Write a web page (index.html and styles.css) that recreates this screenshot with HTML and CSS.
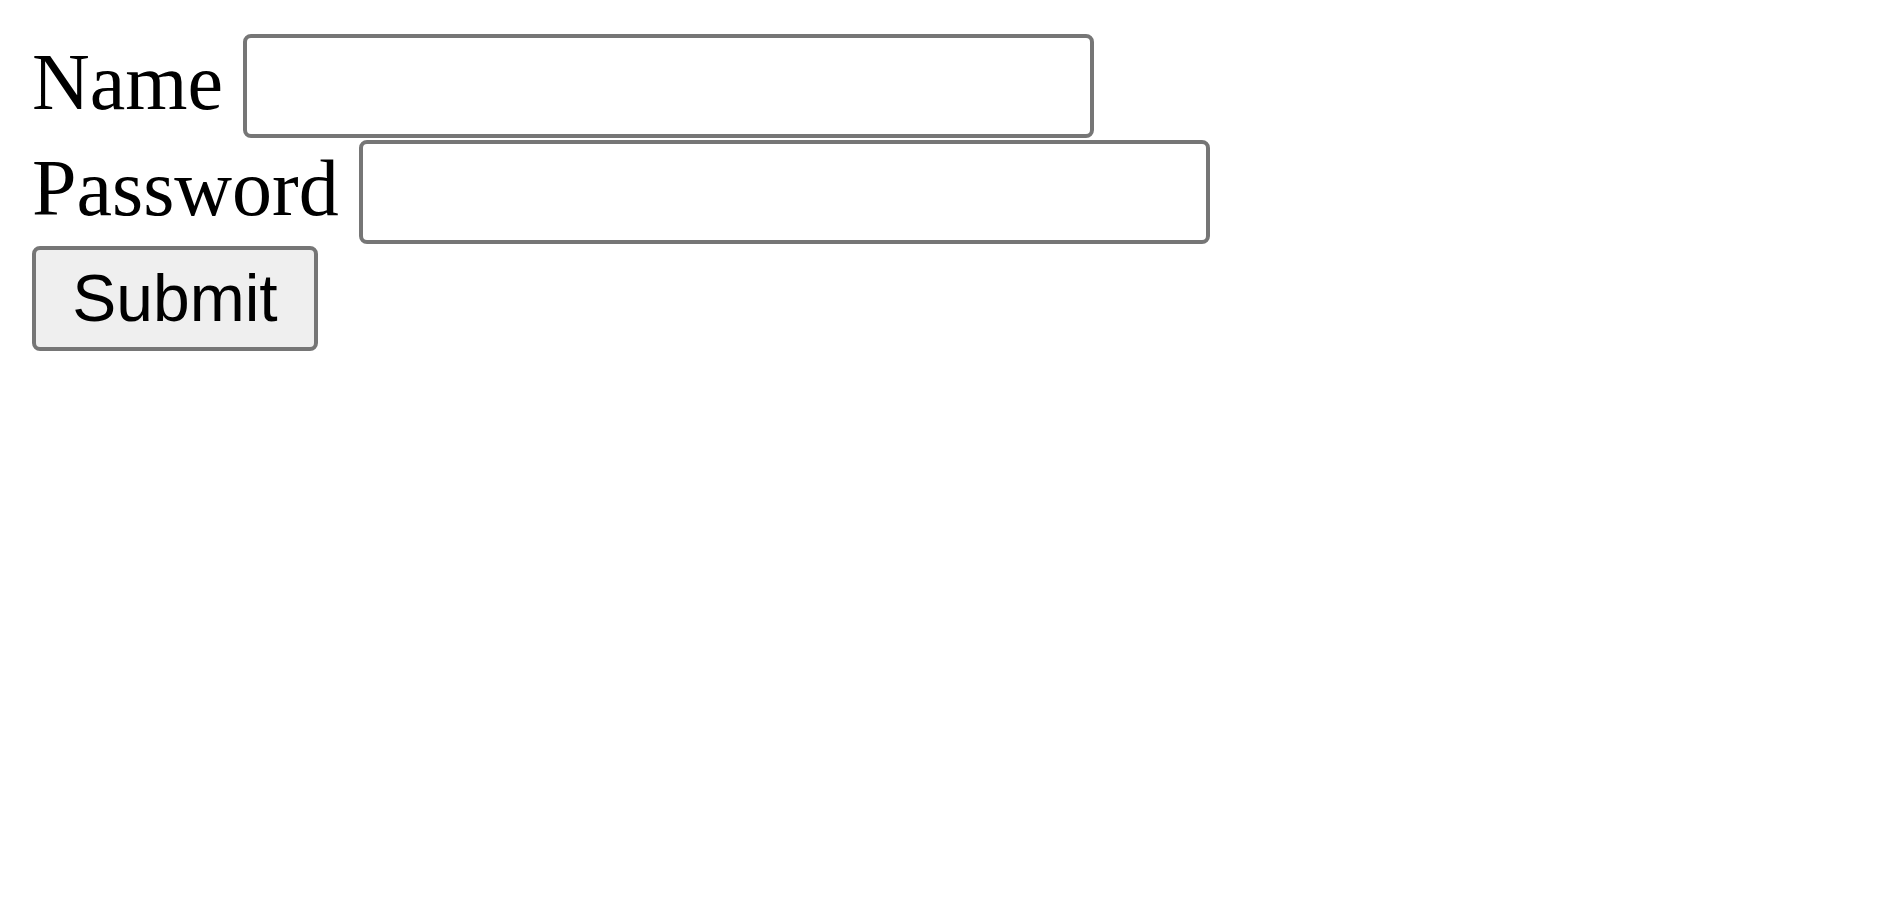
FILE: index.html
```html
<!DOCTYPE html>
<html lang="en">
<head>
<meta charset="utf-8">
<title>Login</title>
<link rel="stylesheet" href="styles.css">
</head>
<body>
<form class="login-form">
  <div class="field-row">
    <label class="field-label" for="name">Name</label>
    <input class="text-input" id="name" type="text">
  </div>
  <div class="field-row">
    <label class="field-label" for="password">Password</label>
    <input class="text-input" id="password" type="password">
  </div>
  <div class="actions">
    <button class="submit-button" type="submit">Submit</button>
  </div>
</form>
</body>
</html>
```
FILE: styles.css
```css
html, body {
  margin: 0;
  padding: 0;
  background: #ffffff;
}

body {
  font-family: "Liberation Serif", "Times New Roman", serif;
  color: #000000;
}

.login-form {
  display: flex;
  flex-direction: column;
  align-items: flex-start;
  gap: 2px;
  padding: 34px 0 0 32px;
}

.field-row {
  display: flex;
  align-items: flex-start;
  gap: 20px;
}

.field-label {
  font-size: 80px;
  line-height: 80px;
  padding-top: 8px;
}

.text-input {
  box-sizing: border-box;
  width: 851px;
  height: 104px;
  margin: 0;
  padding: 0 8px;
  border: 4px solid #767676;
  border-radius: 8px;
  background: #ffffff;
  font-family: "Liberation Sans", Arial, sans-serif;
  font-size: 64px;
  outline: none;
}

.submit-button {
  box-sizing: border-box;
  width: 286px;
  height: 105px;
  margin: 0;
  padding: 0 0 2px;
  border: 4px solid #767676;
  border-radius: 8px;
  background: #efefef;
  color: #000000;
  font-family: "Liberation Sans", Arial, sans-serif;
  font-size: 66px;
  line-height: 1;
}
```
